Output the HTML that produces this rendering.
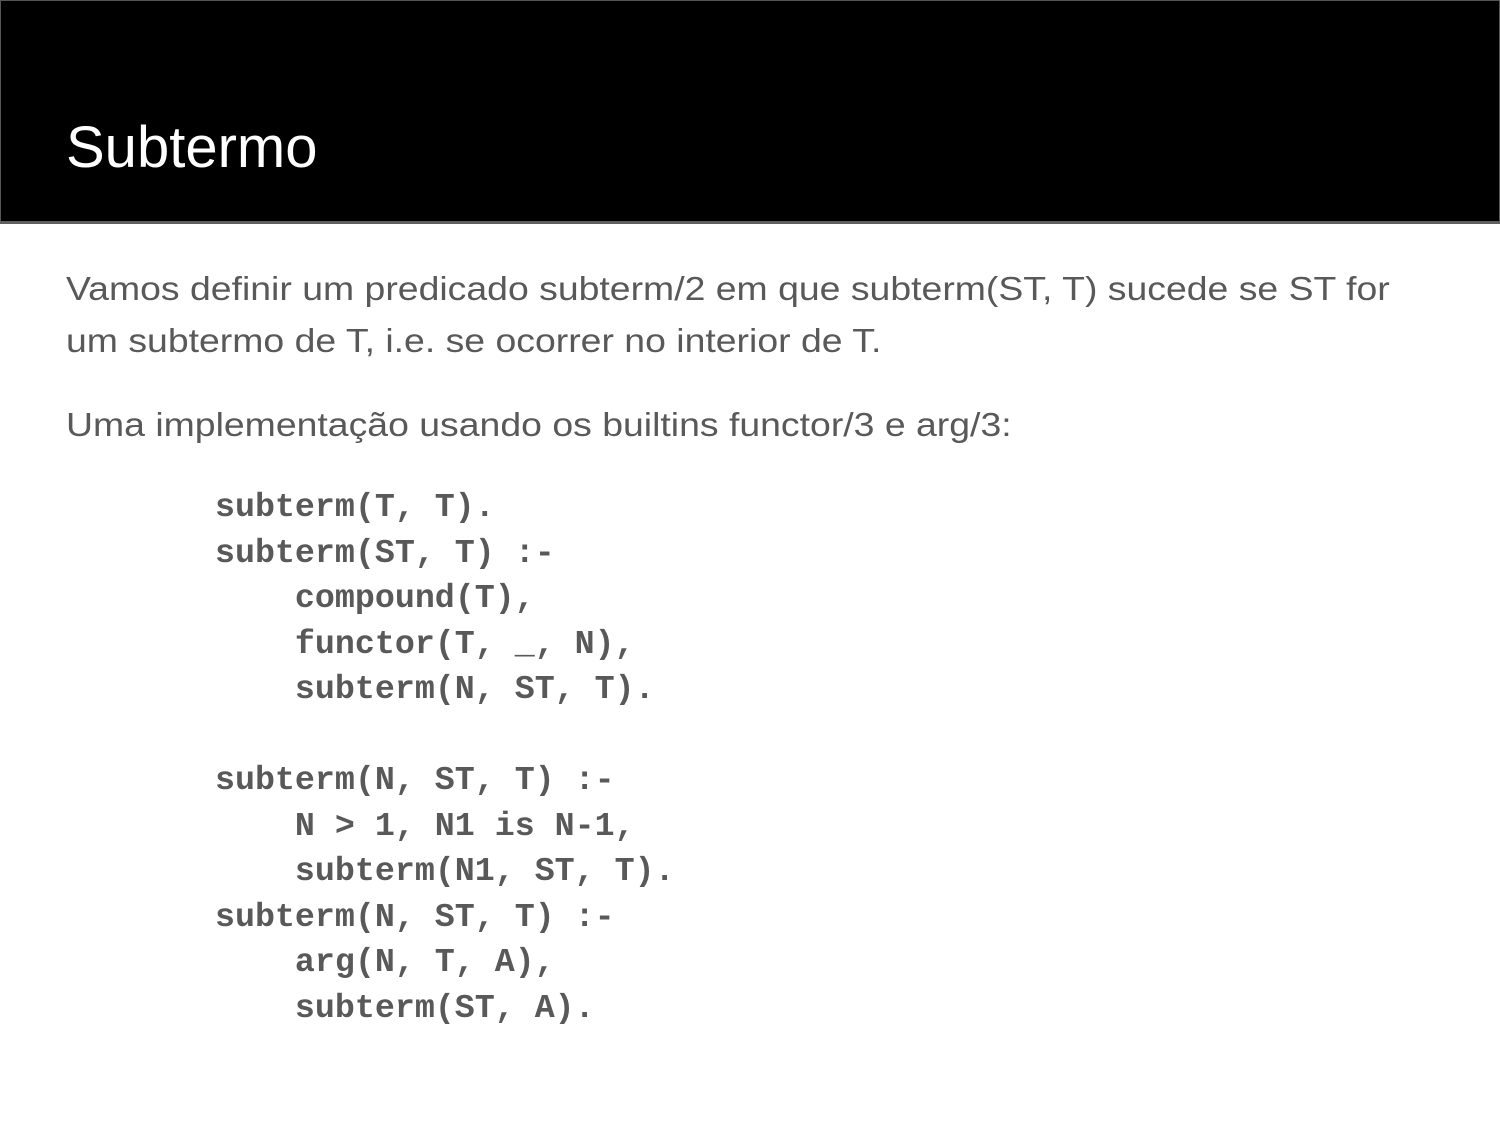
<!DOCTYPE html>
<html><head><meta charset="utf-8"><style>
html,body{margin:0;padding:0;background:#fff;width:1500px;height:1125px;overflow:hidden;position:relative}
.hdr{position:absolute;left:0;top:0;width:1498px;height:220px;background:#000;border:1px solid #555;border-bottom:none}
.bar{position:absolute;left:0;top:221px;width:1500px;height:3px;background:#5f5f5f}
.t{position:absolute;left:66px;top:113px;font:58px/70px "Liberation Sans",Arial,sans-serif;color:#fff;white-space:nowrap}
.p{position:absolute;left:66px;font:33px/52px "Liberation Sans",Arial,sans-serif;color:#595959;white-space:nowrap;transform:scaleX(1.133);transform-origin:0 0}
.c{position:absolute;left:215px;top:485px;font:bold 33.3px/45.5px "Liberation Mono",monospace;color:#595959;white-space:pre;margin:0}
</style></head><body>
<div class="hdr"></div><div class="bar"></div>
<div class="t">Subtermo</div>
<div class="p" style="top:263px">Vamos definir um predicado subterm/2 em que subterm(ST, T) sucede se ST for<br>um subtermo de T, i.e. se ocorrer no interior de T.</div>
<div class="p" style="top:399px">Uma implementação usando os builtins functor/3 e arg/3:</div>
<pre class="c">subterm(T, T).
subterm(ST, T) :-
    compound(T),
    functor(T, _, N),
    subterm(N, ST, T).

subterm(N, ST, T) :-
    N &gt; 1, N1 is N-1,
    subterm(N1, ST, T).
subterm(N, ST, T) :-
    arg(N, T, A),
    subterm(ST, A).</pre>
</body></html>
